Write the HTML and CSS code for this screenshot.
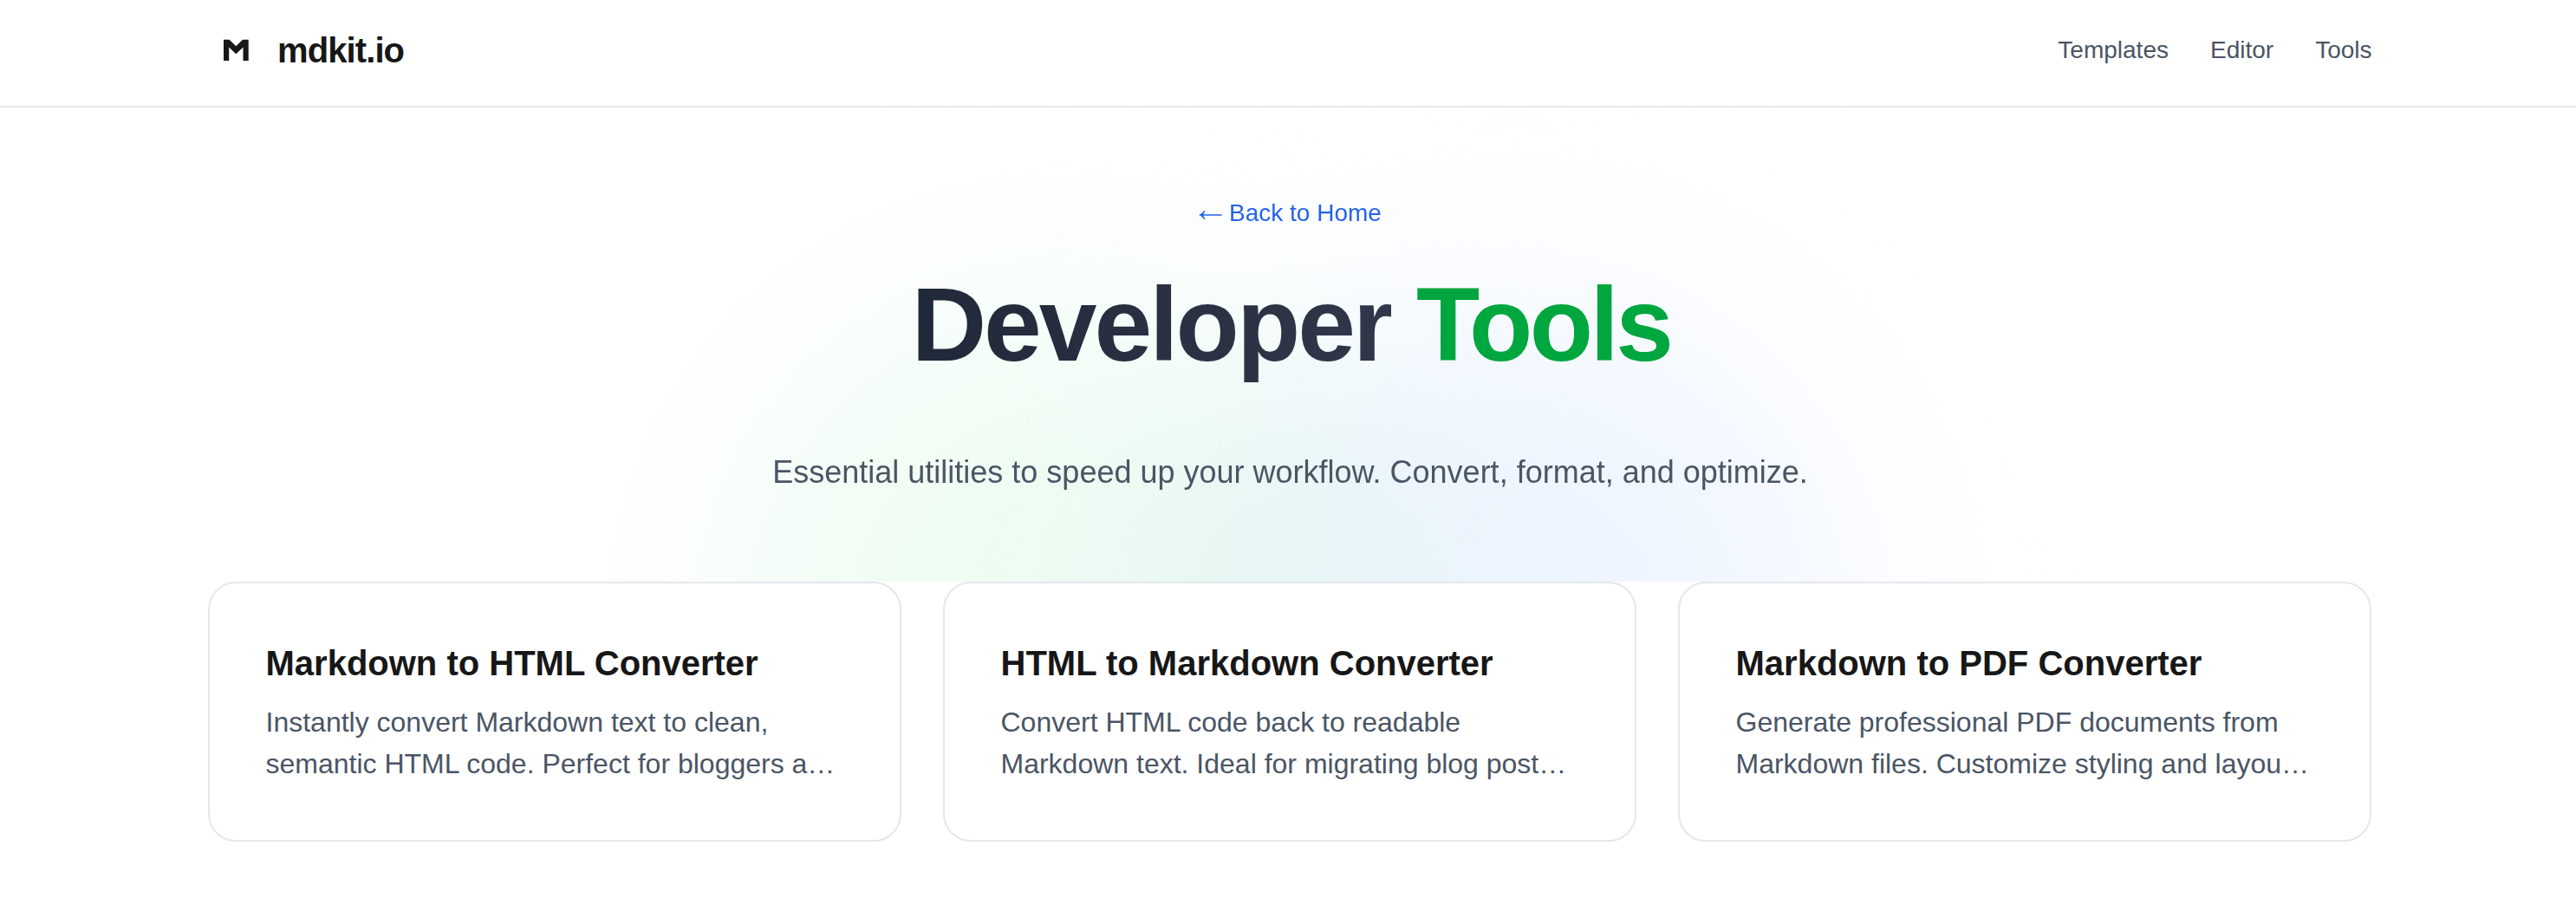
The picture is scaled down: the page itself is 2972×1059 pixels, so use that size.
FILE: index.html
```html
<!DOCTYPE html>
<html lang="en">
<head>
<meta charset="utf-8">
<title>Developer Tools - mdkit.io</title>
<link rel="stylesheet" href="styles.css">
</head>
<body>
<header class="site-header">
  <a class="brand" href="#">
    <svg class="brand-icon" viewBox="0 0 64 64" aria-hidden="true"><path d="M18 44V19.700h6.600l7.700 7.500 7.700-7.500h6.700V44h-6.200V28.600L32.300 36.300 24.200 28.600V44z"/></svg>
    <span class="brand-name">mdkit.io</span>
  </a>
  <nav class="nav">
    <a href="#">Templates</a>
    <a href="#">Editor</a>
    <a href="#">Tools</a>
  </nav>
</header>
<main>
  <section class="hero">
    <div class="glow glow-green"></div>
    <div class="glow glow-blue"></div>
    <a class="back" href="#"><svg class="back-arrow" viewBox="0 0 28 12" aria-hidden="true"><path d="M0 6C3 4.700 5 3 6.300 0.800L7.300 1.300C6.600 3 6 4.300 5.300 5.300H26.500V6.800H5.300C6 7.800 6.600 9 7.300 10.700L6.300 11.200C5 9 3 7.300 0 6z"/></svg>Back to Home</a>
    <h1 class="title"><span class="title-main">Developer</span> <span class="title-accent">Tools</span></h1>
    <p class="subtitle">Essential utilities to speed up your workflow. Convert, format, and optimize.</p>
  </section>
  <section class="cards">
    <article class="card">
      <h2>Markdown to HTML Converter</h2>
      <p>Instantly convert Markdown text to clean,<br>semantic HTML code. Perfect for bloggers a…</p>
    </article>
    <article class="card">
      <h2>HTML to Markdown Converter</h2>
      <p>Convert HTML code back to readable<br>Markdown text. Ideal for migrating blog post…</p>
    </article>
    <article class="card">
      <h2>Markdown to PDF Converter</h2>
      <p>Generate professional PDF documents from<br>Markdown files. Customize styling and layou…</p>
    </article>
  </section>
</main>
</body>
</html>
```
FILE: styles.css
```css
* { box-sizing: border-box; margin: 0; padding: 0; }

body {
  min-height: 1059px;
  background: #fff;
  color: #171717;
  font-family: "Liberation Sans", Arial, sans-serif;
}

a { color: inherit; text-decoration: none; }

.site-header {
  display: flex;
  align-items: center;
  justify-content: space-between;
  height: 124px;
  padding: 0 235.500px 6px 240px;
  border-bottom: 2px solid #e5e7eb;
}

.brand { display: flex; align-items: center; gap: 16px; }
.brand-icon { width: 64px; height: 64px; fill: #171717; }
.brand-name { font-size: 40px; font-weight: 700; line-height: 56px; letter-spacing: -0.9px; }

.nav { display: flex; gap: 48px; font-size: 28px; line-height: 40px; color: #4a5565; }

.hero {
  position: relative;
  isolation: isolate;
  display: flex;
  flex-direction: column;
  align-items: center;
  height: 547px;
  padding: 102px 0 0 5px;
  overflow: hidden;
}

.glow {
  position: absolute;
  z-index: -1;
  top: 215px;
  width: 768px;
  height: 768px;
  border-radius: 50%;
  filter: blur(128px);
  mix-blend-mode: multiply;
}
.glow-green { left: 840px; background: #eefcf2; }
.glow-blue { left: 1365px; background: #eef5ff; }

.back { display: flex; align-items: center; gap: 7px; font-size: 28px; line-height: 40px; color: #2563eb; }
.back-arrow { width: 28px; height: 12px; margin-top: 3px; fill: currentColor; }

.title {
  margin-top: 48px;
  padding-left: 2px;
  font-size: 120px;
  line-height: 120px;
  letter-spacing: -3px;
  word-spacing: -1px;
  white-space: nowrap;
}
.title-main {
  padding-bottom: 20px;
  background: linear-gradient(to right, #202939, #30374a);
  background-clip: text;
  -webkit-background-clip: text;
  color: transparent;
}
.title-accent { color: #00a63e; letter-spacing: -3.500px; }

.subtitle { margin-top: 83px; font-size: 36px; line-height: 56px; color: #4a5565; }

.cards {
  display: grid;
  grid-template-columns: repeat(3, 1fr);
  gap: 48px;
  padding: 0 236px 0 240px;
}

.card {
  height: 300px;
  padding: 64px 64px 64px 64.500px;
  border: 2px solid #e5e7eb;
  border-radius: 32px;
  background: #fff;
}
.card h2 { font-size: 40px; line-height: 56px; }
.card p { margin-top: 16px; font-size: 32px; line-height: 48px; color: #4a5565; white-space: nowrap; }
```
